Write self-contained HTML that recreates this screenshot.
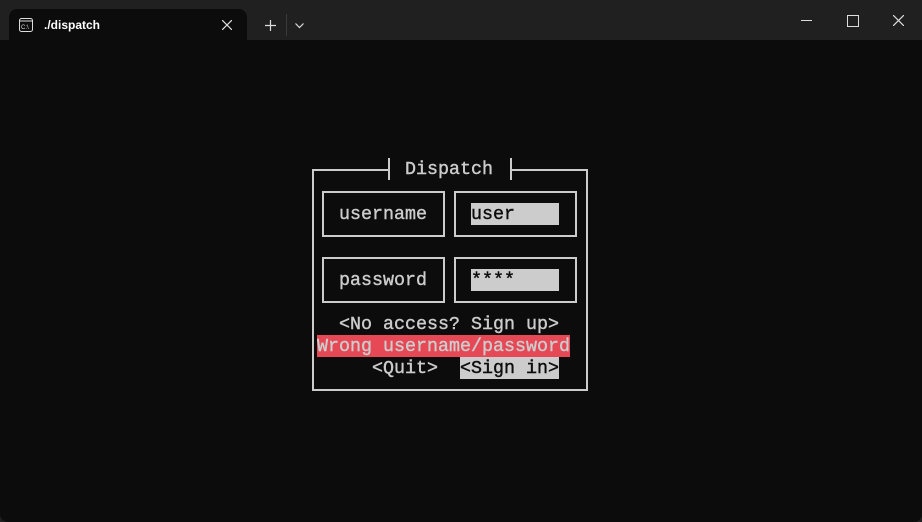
<!DOCTYPE html>
<html><head><style>
body{margin:0;width:922px;height:522px;background:#202020;overflow:hidden;position:relative;font-family:"Liberation Sans",sans-serif}
.term{position:absolute;left:0;top:40px;width:922px;height:482px;background:#0c0c0c;border-radius:0 0 8px 8px}
.tab{position:absolute;left:9px;top:9px;width:238px;height:32px;background:#0c0c0c;border-radius:8px 8px 0 0}
.t{position:absolute;font-family:"Liberation Mono",monospace;font-size:18.33px;line-height:24px;height:22px;color:#cccccc;white-space:pre;-webkit-text-stroke:0.4px currentColor;overflow:hidden}
.b{position:absolute;border:2px solid #cccccc;box-sizing:border-box}
.hl{background:#cccccc;color:#0c0c0c}
</style></head><body>
<div class="tab"></div>
<svg style="position:absolute;left:19px;top:18px" width="14" height="14" viewBox="0 0 14 14"><rect x="0.5" y="0.5" width="13" height="13" rx="2" fill="none" stroke="#ddd"/><line x1="0.5" y1="3" x2="13.5" y2="3" stroke="#ddd"/><text x="2" y="11" font-size="6" fill="#ddd" font-family="Liberation Sans">C:\</text></svg>
<div style="position:absolute;left:44px;top:18px;font-size:12px;color:#fff;font-weight:bold">./dispatch</div>
<svg style="position:absolute;left:222px;top:20px" width="10" height="10"><path d="M0 0L10 10M10 0L0 10" stroke="#ddd" stroke-width="1.2"/></svg>
<svg style="position:absolute;left:265px;top:20px" width="11" height="11"><path d="M5.5 0V11M0 5.5H11" stroke="#ddd" stroke-width="1.2"/></svg>
<div style="position:absolute;left:286px;top:14px;width:1px;height:22px;background:#3a3a3a"></div>
<svg style="position:absolute;left:295px;top:23px" width="9" height="6"><path d="M0.5 0.5L4.5 4.5L8.5 0.5" stroke="#ddd" fill="none" stroke-width="1.2"/></svg>
<div style="position:absolute;left:801px;top:20px;width:11px;height:1px;background:#ddd"></div>
<div style="position:absolute;left:847px;top:15px;width:10px;height:10px;border:1px solid #ddd"></div>
<svg style="position:absolute;left:893px;top:15px" width="11" height="11"><path d="M0 0L11 11M11 0L0 11" stroke="#ddd" stroke-width="1.2"/></svg>
<div class="term"></div>
<div class="b" style="left:312px;top:169px;width:276px;height:222px;border-top:none"></div>
<div style="position:absolute;left:312px;top:169px;width:78px;height:2px;background:#ccc"></div>
<div style="position:absolute;left:510px;top:169px;width:78px;height:2px;background:#ccc"></div>
<div style="position:absolute;left:388px;top:158px;width:2px;height:22px;background:#ccc"></div>
<div style="position:absolute;left:510px;top:158px;width:2px;height:22px;background:#ccc"></div>
<div class="t" style="left:405px;top:158px">Dispatch</div>
<div class="b" style="left:322px;top:191px;width:123px;height:46px"></div>
<div class="b" style="left:454px;top:191px;width:123px;height:46px"></div>
<div class="b" style="left:322px;top:257px;width:123px;height:46px"></div>
<div class="b" style="left:454px;top:257px;width:123px;height:46px"></div>
<div class="t" style="left:339px;top:203px">username</div>
<div class="t hl" style="left:471px;top:203px;width:88px">user</div>
<div class="t" style="left:339px;top:269px">password</div>
<div class="t hl" style="left:471px;top:269px;width:88px">****</div>
<div class="t" style="left:339px;top:313px">&lt;No access? Sign up&gt;</div>
<div class="t" style="left:317px;top:335px;background:#e74856;width:253px">Wrong username/password</div>
<div class="t" style="left:372px;top:357px">&lt;Quit&gt;</div>
<div class="t hl" style="left:460px;top:357px;width:99px">&lt;Sign in&gt;</div>
</body></html>
